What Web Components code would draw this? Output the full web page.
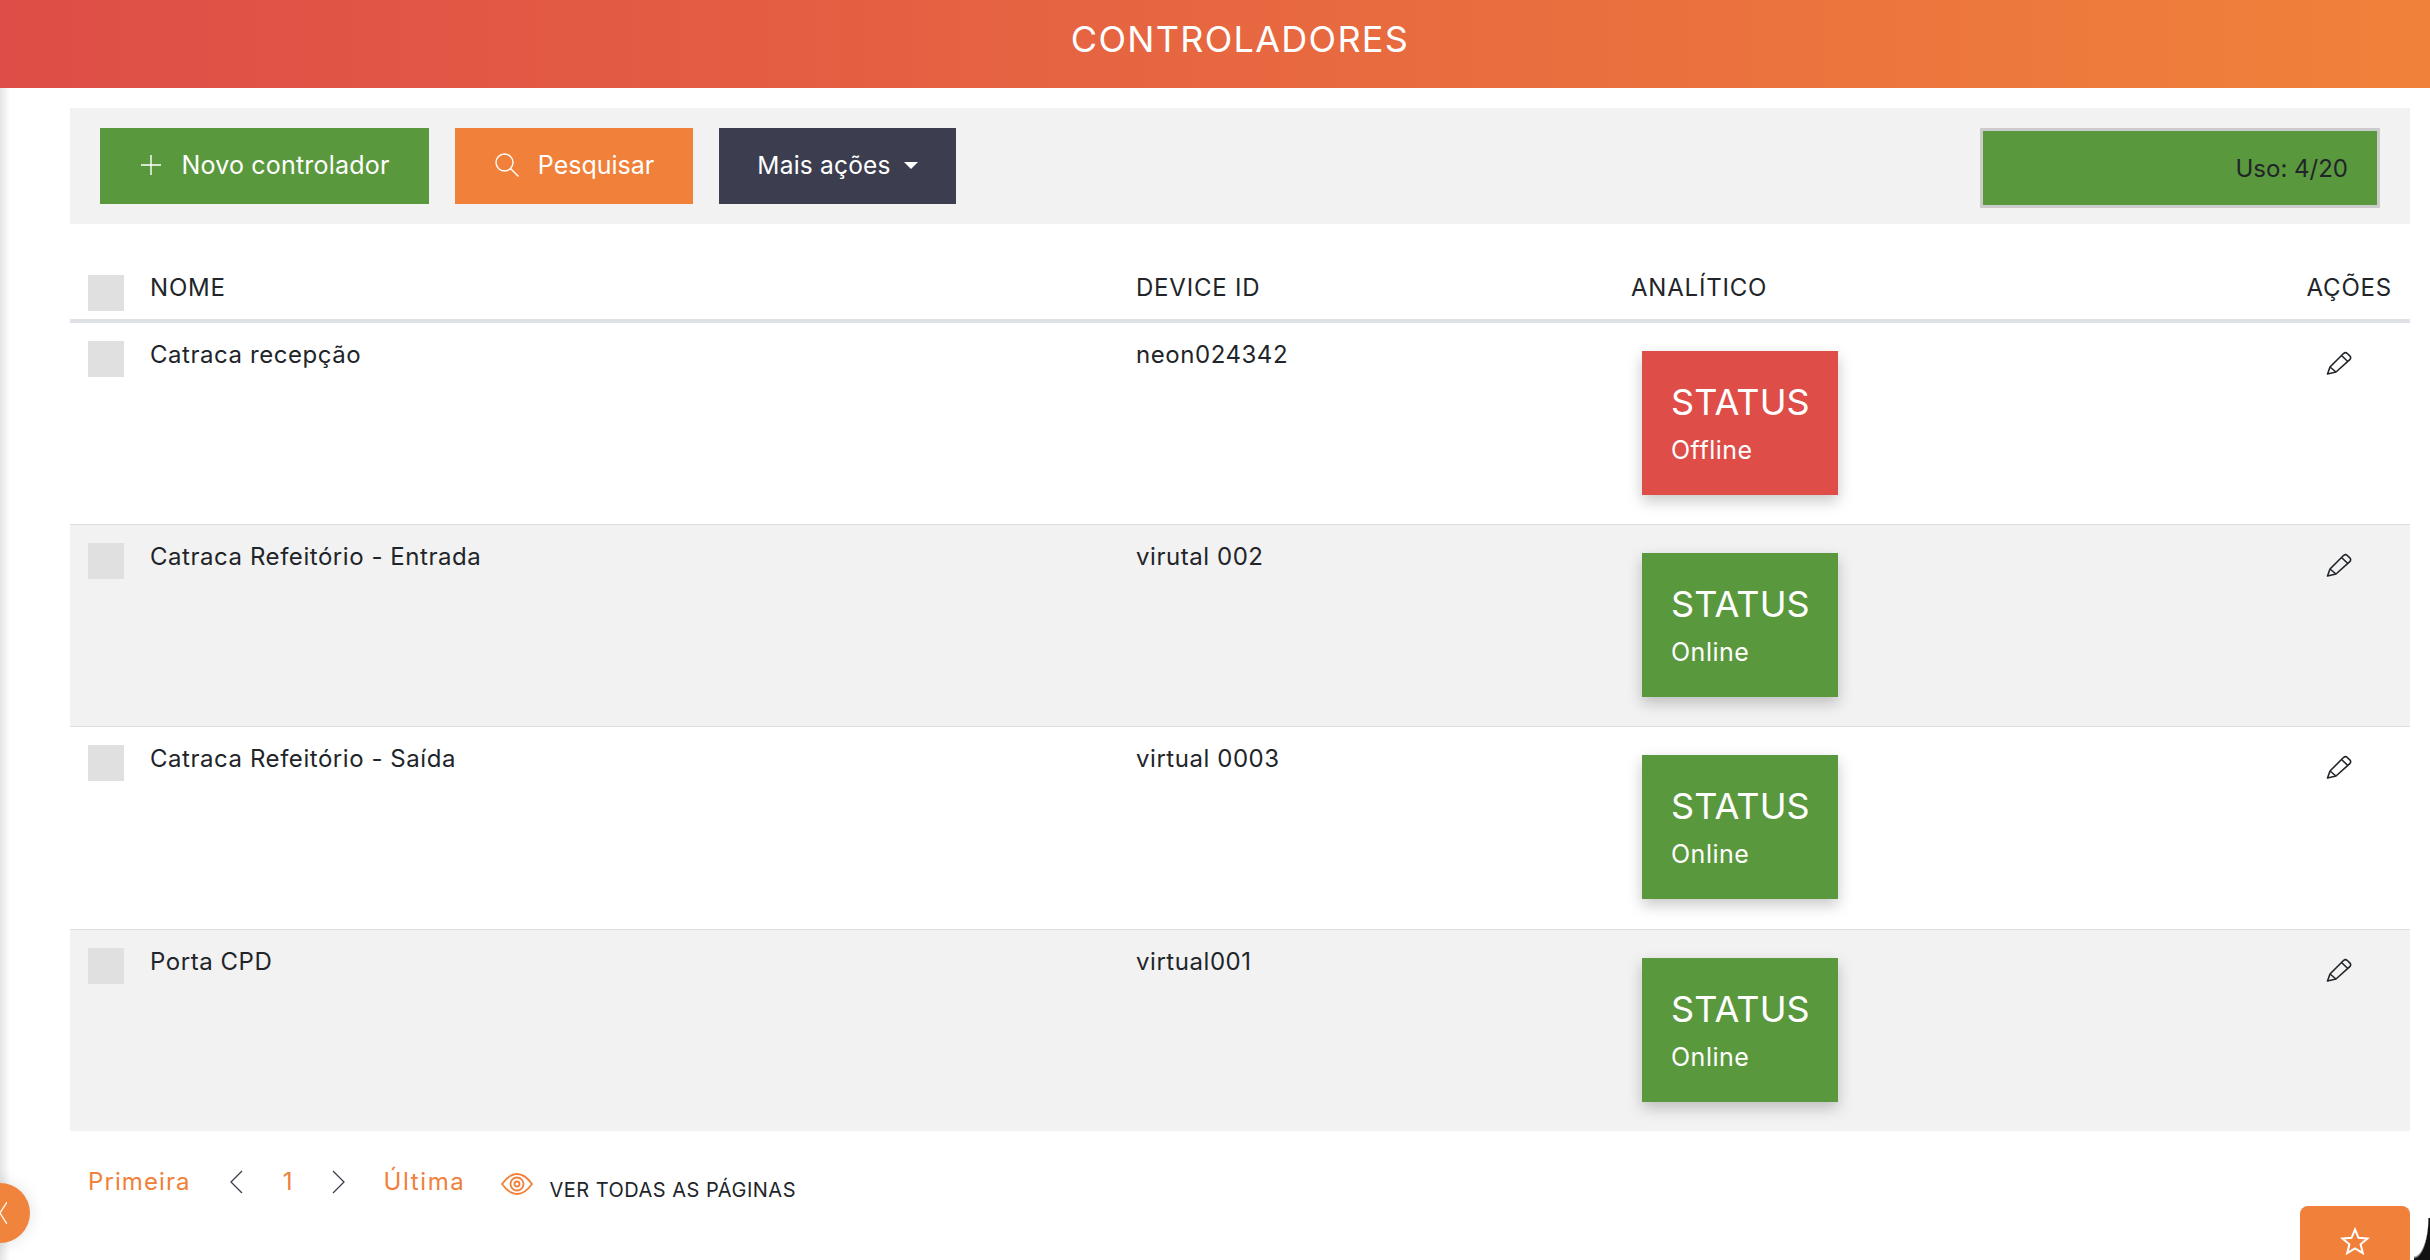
<!DOCTYPE html>
<html lang="pt">
<head>
<meta charset="utf-8">
<title>Controladores</title>
<style>
    html, body { margin: 0; height: 100%; background: #fff; overflow: hidden; }
    body { font-family: Inter, "Open Sans", sans-serif; color: #212529; }
</style>
</head>
<body>
<controllers-page>
    <page-header slot="header">CONTROLADORES</page-header>

    <page-toolbar slot="toolbar">
        <action-button color="#5a983e" icon="plus" style="--btn-width:329px">Novo controlador</action-button>
        <action-button color="#f0803a" icon="search" style="--btn-width:238px;letter-spacing:0">Pesquisar</action-button>
        <action-button color="#3d3d50" caret style="--btn-width:237px;font-size:24.5px">Mais ações</action-button>
        <usage-meter slot="end">Uso: 4/20</usage-meter>
    </page-toolbar>

    <controller-table slot="table">
        <controller-row head nome="NOME" device="DEVICE ID" analitico="ANALÍTICO"></controller-row>
        <controller-row nome="Catraca recepção" device="neon024342" status="Offline"></controller-row>
        <controller-row striped nome="Catraca Refeitório - Entrada" device="virutal 002" status="Online"></controller-row>
        <controller-row nome="Catraca Refeitório - Saída" device="virtual 0003" status="Online"></controller-row>
        <controller-row striped nome="Porta CPD" device="virtual001" status="Online"></controller-row>
    </controller-table>

    <table-pager slot="pager"></table-pager>
</controllers-page>

<script>
const ICONS = {
    plus: '<svg width="24" height="24" viewBox="0 0 24 24" fill="none" stroke="currentColor" stroke-width="1.4"><path d="M12 2v20M2 12h20"/></svg>',
    search: '<svg width="26" height="26" viewBox="0 0 26 26" fill="none" stroke="currentColor" stroke-width="1.4"><circle cx="10.5" cy="10.5" r="8.5"/><path d="M16.5 16.5l8 8"/></svg>',
    pencil: '<svg width="26" height="24" viewBox="0 0 26 24" fill="none" stroke="#212529" stroke-width="1.6" stroke-linejoin="round"><path d="M1.500 23l2.500-7L17.500 2.500q2-1.700 3.800 0l2.500 2.300q1.700 2 0 3.900L10 21z"/><path d="M4 16l6 5M15.500 4.500l6.300 6"/></svg>',
    eye: '<svg width="32" height="22" viewBox="0 0 32 22" fill="none" stroke="#f0803a" stroke-width="1.800"><path d="M1 11C6 4 11 1 16 1s10 3 15 10c-5 7-10 10-15 10S6 18 1 11z"/><circle cx="16" cy="11" r="6.500"/><circle cx="16" cy="11" r="2.500"/></svg>',
    left: '<svg width="14" height="24" viewBox="0 0 14 24" fill="none" stroke="#3d3d50" stroke-width="1.300"><path d="M13 1L2 12l11 11"/></svg>',
    right: '<svg width="14" height="24" viewBox="0 0 14 24" fill="none" stroke="#3d3d50" stroke-width="1.300"><path d="M1 1l11 11L1 23"/></svg>'
};

class ControllersPage extends HTMLElement {
    constructor() {
        super();
        this.attachShadow({ mode: 'open' });
        this.shadowRoot.innerHTML = `
            <style>
                :host { display: block; position: relative; height: 1260px; overflow: hidden; }
                .content { display: flex; flex-direction: column; padding: 20px 20px 0 70px; }
                .edge {
                    position: absolute; left: 0; top: 88px; bottom: 0; width: 10px;
                    background: linear-gradient(90deg, #e4e4e4, #ffffff);
                }
                .toggle {
                    position: absolute; left: -30px; top: 1183px; width: 60px; height: 60px;
                    border-radius: 50%; background: #f0843c;
                    box-shadow: 0 0 16px rgba(0, 0, 0, 0.12);
                    display: flex; align-items: center; justify-content: flex-end;
                }
                .favorite {
                    position: absolute; left: 2300px; top: 1206px; width: 110px; height: 54px;
                    background: #f0803a; border-radius: 8px 8px 0 0;
                    display: flex; justify-content: center; padding-top: 21px; box-sizing: border-box;
                }
                .corner {
                    position: absolute; right: 0; bottom: 0; width: 16px; height: 42px;
                    background: radial-gradient(ellipse 15px 41px at 0 0, #fff 92%, #111 100%);
                }
            </style>
            <slot name="header"></slot>
            <div class="edge"></div>
            <div class="content">
                <slot name="toolbar"></slot>
                <slot name="table"></slot>
                <slot name="pager"></slot>
            </div>
            <div class="toggle">
                <svg width="8" height="24" viewBox="0 0 8 24" fill="none" stroke="#fff" stroke-width="1.300" style="margin-right:23px"><path d="M8 1L1 12l7 11"/></svg>
            </div>
            <div class="favorite">
                <svg width="30" height="28" viewBox="0 0 30 28" fill="none" stroke="#fff" stroke-width="2"><path d="M15 2.500l3.500 8.300 9 .7-6.900 5.800 2.200 8.800L15 21.300l-7.800 4.800 2.200-8.800L2.500 11.500l9-.7z"/></svg>
            </div>
            <div class="corner"></div>
        `;
    }
}

class PageHeader extends HTMLElement {
    constructor() {
        super();
        this.attachShadow({ mode: 'open' });
        this.shadowRoot.innerHTML = `
            <style>
                :host {
                    display: flex; align-items: center; justify-content: center;
                    height: 88px; padding: 0 0 10px 50px; box-sizing: border-box;
                    background: linear-gradient(90deg, #de4d47, #f0813a);
                    color: #fff; font-size: 36px; font-weight: 400; letter-spacing: 1.3px;
                }
            </style>
            <slot></slot>
        `;
    }
}

class PageToolbar extends HTMLElement {
    constructor() {
        super();
        this.attachShadow({ mode: 'open' });
        this.shadowRoot.innerHTML = `
            <style>
                :host {
                    display: flex; align-items: flex-start; gap: 26px;
                    height: 116px; padding: 20px 30px 0 30px; box-sizing: border-box;
                    background: #f2f2f2;
                }
                .end { margin-left: auto; display: flex; }
            </style>
            <slot></slot>
            <div class="end"><slot name="end"></slot></div>
        `;
    }
}

class ActionButton extends HTMLElement {
    constructor() {
        super();
        this.attachShadow({ mode: 'open' });
    }

    connectedCallback() {
        const icon = this.getAttribute('icon');
        this.shadowRoot.innerHTML = `
            <style>
                :host {
                    display: flex; align-items: center; justify-content: center; gap: 18px;
                    width: var(--btn-width); height: 76px; padding-bottom: 2px; box-sizing: border-box;
                    background: ${this.getAttribute('color')}; color: #fff;
                    font-size: 25px; letter-spacing: 0.2px;
                }
                .caret {
                    width: 0; height: 0; margin-left: -5px;
                    border-left: 7px solid transparent; border-right: 7px solid transparent;
                    border-top: 7px solid #fff;
                }
                svg { display: block; }
            </style>
            ${icon ? ICONS[icon] : ''}
            <span><slot></slot></span>
            ${this.hasAttribute('caret') ? '<span class="caret"></span>' : ''}
        `;
    }
}

class UsageMeter extends HTMLElement {
    constructor() {
        super();
        this.attachShadow({ mode: 'open' });
        this.shadowRoot.innerHTML = `
            <style>
                :host {
                    display: flex; align-items: center; justify-content: flex-end;
                    width: 400px; height: 80px; padding-right: 29px; box-sizing: border-box;
                    background: #5a983e; border: 3px solid #ccc;
                    color: #212529; font-size: 24px;
                }
            </style>
            <slot></slot>
        `;
    }
}

class ControllerTable extends HTMLElement {
    constructor() {
        super();
        this.attachShadow({ mode: 'open' });
        this.shadowRoot.innerHTML = `
            <style>:host { display: block; margin-top: 51px; }</style>
            <slot></slot>
        `;
    }
}

class ControllerRow extends HTMLElement {
    constructor() {
        super();
        this.attachShadow({ mode: 'open' });
    }

    connectedCallback() {
        const head = this.hasAttribute('head');
        const analitico = head
            ? this.getAttribute('analitico')
            : `<status-card state="${this.getAttribute('status')}"></status-card>`;
        const acoes = head ? 'AÇÕES' : `<span class="pencil">${ICONS.pencil}</span>`;

        this.shadowRoot.innerHTML = `
            <style>
                :host {
                    display: grid; grid-template-columns: 80px 986px 495px 1fr 110px;
                    box-sizing: border-box;
                    height: ${head ? 48 : 202.2}px;
                    padding-top: ${head ? 0 : 18}px;
                    background: ${this.hasAttribute('striped') ? '#f2f2f2' : '#fff'};
                    border-bottom: ${head ? '4px solid #dee2e6' : '1px solid #dedede'};
                    font-size: 24px; color: #212529;
                    line-height: 28px;
                    letter-spacing: ${head ? 0.8 : 0.55}px;
                }
                :host(:last-child) { border-bottom: none; height: 201px; }
                .check { width: 36px; height: 36px; background: #e0e0e0; margin-left: 18px; }
                .cell { margin-top: ${head ? -1 : 0}px; }
                .right { display: flex; justify-content: flex-end; padding-right: 18px; }
                .pencil { display: block; margin: 10px 40px 0 0; }
                svg { display: block; }
            </style>
            <div><div class="check"></div></div>
            <div class="cell">${this.getAttribute('nome')}</div>
            <div class="cell">${this.getAttribute('device')}</div>
            <div class="cell">${analitico}</div>
            <div class="cell right">${acoes}</div>
        `;
    }
}

class StatusCard extends HTMLElement {
    constructor() {
        super();
        this.attachShadow({ mode: 'open' });
    }

    connectedCallback() {
        const state = this.getAttribute('state');
        this.shadowRoot.innerHTML = `
            <style>
                :host {
                    display: flex; flex-direction: column; box-sizing: border-box;
                    width: 196px; height: 144px; margin: 10px 0 0 11px;
                    padding: 29px 0 0 29px;
                    background: ${state === 'Offline' ? '#de4d47' : '#5a983e'};
                    color: #fff;
                    box-shadow: 0 6px 14px rgba(0, 0, 0, 0.22);
                    letter-spacing: 0;
                }
                .title { font-size: 36px; line-height: 44px; letter-spacing: 0.1px; }
                .state { font-size: 25px; line-height: 30px; margin-top: 11px; letter-spacing: 0.5px; }
            </style>
            <div class="title">STATUS</div>
            <div class="state">${state}</div>
        `;
    }
}

class TablePager extends HTMLElement {
    constructor() {
        super();
        this.attachShadow({ mode: 'open' });
        this.shadowRoot.innerHTML = `
            <style>
                :host {
                    display: flex; align-items: center; height: 36px;
                    margin-top: 33px; padding-left: 18px;
                    font-size: 24px; color: #f0803a; letter-spacing: 1.1px;
                }
                span, svg { display: block; }
                .ver { font-size: 20px; color: #212529; margin: 16px 0 0 16px; letter-spacing: 0.5px; }
            </style>
            <span>Primeira</span>
            <span style="margin-left:38px">${ICONS.left}</span>
            <span style="margin-left:40px">1</span>
            <span style="margin-left:38px">${ICONS.right}</span>
            <span style="margin-left:38px;letter-spacing:1.6px">Última</span>
            <span style="margin-left:36px;margin-top:4px">${ICONS.eye}</span>
            <span class="ver">VER TODAS AS PÁGINAS</span>
        `;
    }
}

customElements.define('controllers-page', ControllersPage);
customElements.define('page-header', PageHeader);
customElements.define('page-toolbar', PageToolbar);
customElements.define('action-button', ActionButton);
customElements.define('usage-meter', UsageMeter);
customElements.define('controller-table', ControllerTable);
customElements.define('controller-row', ControllerRow);
customElements.define('status-card', StatusCard);
customElements.define('table-pager', TablePager);
</script>
</body>
</html>
